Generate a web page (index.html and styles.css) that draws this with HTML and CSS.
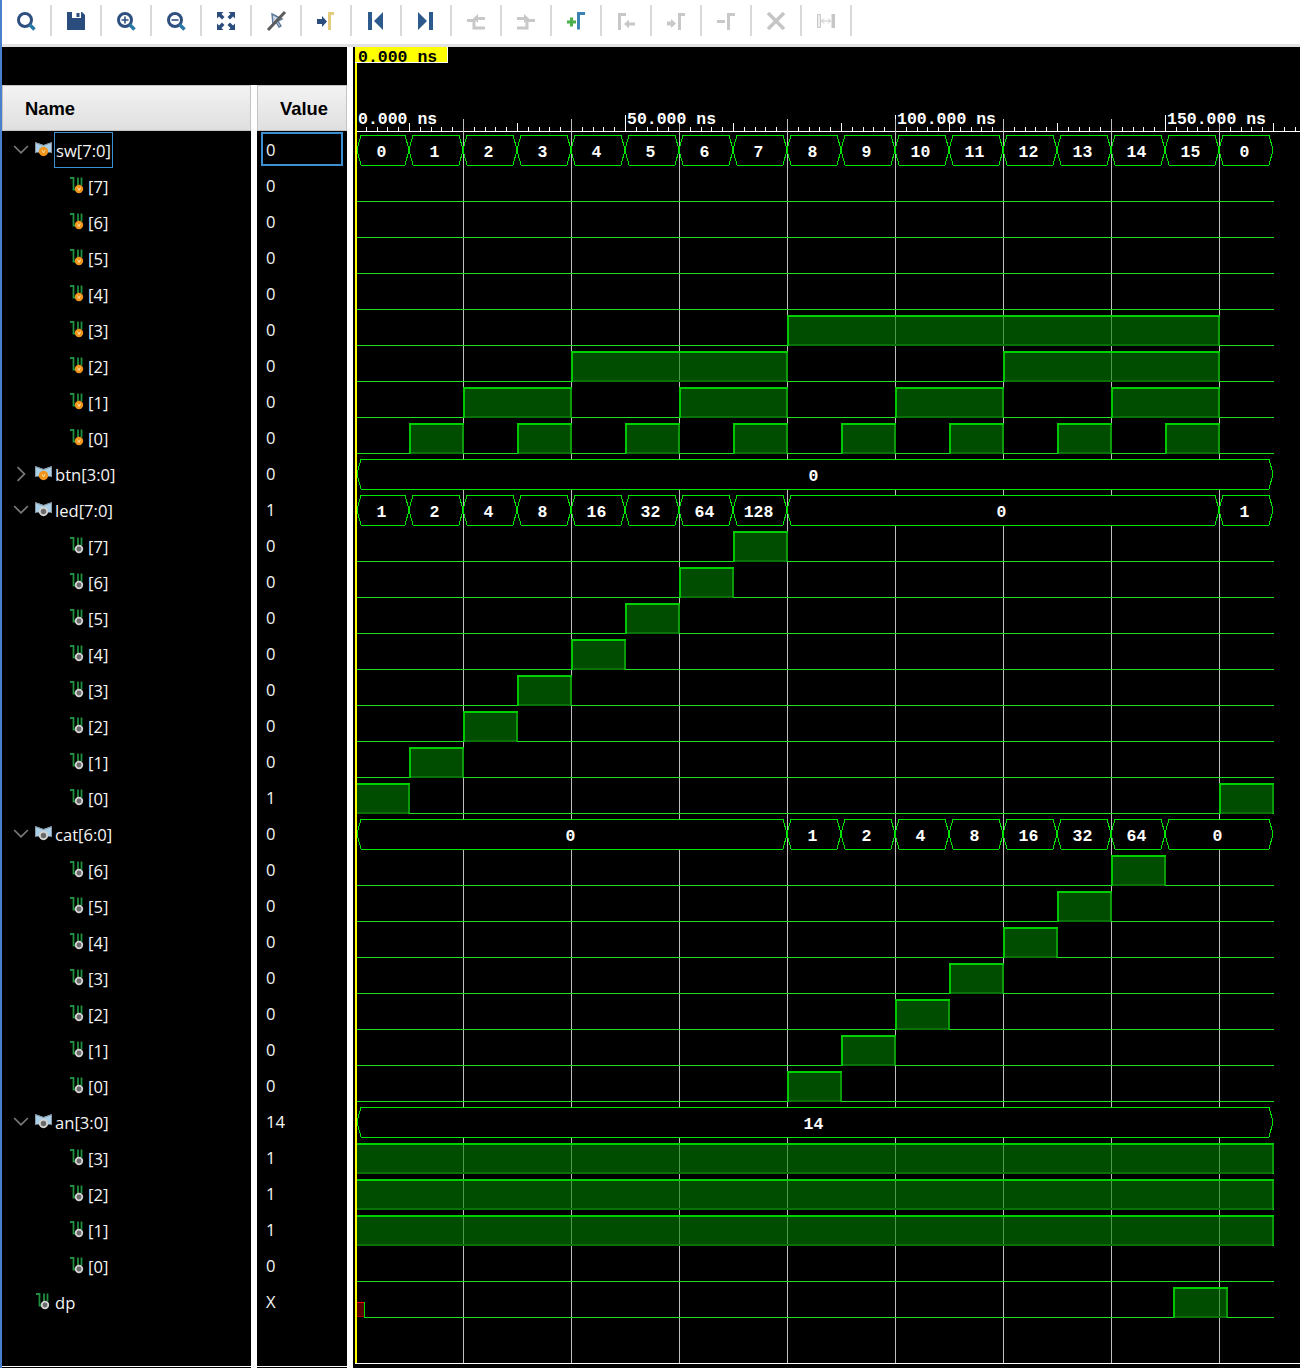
FILE: index.html
```html
<!DOCTYPE html>
<html lang="en">
<head>
    <meta charset="UTF-8">
    <title>Waveform Viewer</title>
    <link rel="stylesheet" href="styles.css">
</head>
<body>
    <svg class="defs">
        <symbol id="wire-in" viewBox="0 0 14 17">
            <path d="M0 1h3.500v11.500h3M8 0.500v8M11.500 0.500v8" fill="none" stroke="#1d8f3e" stroke-width="1.800"/>
            <circle cx="9" cy="12" r="4.200" fill="#f0941c"/>
            <path d="M7.500 10.500l1.500 3 1.500-3" fill="none" stroke="#ffe2a8" stroke-width="0.900"/>
        </symbol>
        <symbol id="wire-out" viewBox="0 0 14 17">
            <path d="M0 1h3.500v11.500h3M8 0.500v8M11.500 0.500v8" fill="none" stroke="#1d8f3e" stroke-width="1.800"/>
            <circle cx="9" cy="12" r="3.300" fill="#6a6a6a" stroke="#d2d2d2" stroke-width="1.800"/>
        </symbol>
        <symbol id="bus-in" viewBox="0 0 17 15">
            <path d="M0 0.500h1.500l7 2.500 7-2.500H17v10H0z" fill="#a9d0e8"/>
            <path d="M0.500 11V0.800l8 2.800 8-2.800V11" fill="none" stroke="#8b97a3"/>
            <circle cx="8.500" cy="9.500" r="4.700" fill="#f0941c"/>
            <path d="M7 8l1.500 3 1.500-3" fill="none" stroke="#ffe2a8" stroke-width="0.900"/>
        </symbol>
        <symbol id="bus-out" viewBox="0 0 17 15">
            <path d="M0 0.500h1.500l7 2.500 7-2.500H17v10H0z" fill="#a9d0e8"/>
            <path d="M0.500 11V0.800l8 2.800 8-2.800V11" fill="none" stroke="#8b97a3"/>
            <circle cx="8.500" cy="9.500" r="3.700" fill="#6a6a6a" stroke="#d2d2d2" stroke-width="2"/>
        </symbol>
        <symbol id="chev-down" viewBox="0 0 14 9">
            <path d="M1 1l6 6 6-6" fill="none" stroke="#7a7a7a" stroke-width="1.500"/>
        </symbol>
        <symbol id="chev-right" viewBox="0 0 14 14">
            <path d="M4 1l6 6-6 6" fill="none" stroke="#7a7a7a" stroke-width="1.500"/>
        </symbol>
    </svg>

    <div class="toolbar">
        <div class="tool"><svg viewBox="0 0 24 24"><circle cx="11" cy="11" r="6.500" class="ring"/><path d="M15.500 15.500l5 5" class="handle"/></svg></div>
        <div class="tool"><svg viewBox="0 0 24 24"><path d="M3 3h15l3 3v15H3z" class="solid"/><path d="M8 3h9v6H8z" fill="#fff"/><path d="M12.500 4h3v4h-3z" class="solid"/></svg></div>
        <div class="tool"><svg viewBox="0 0 24 24"><circle cx="11" cy="11" r="6.500" class="ring"/><path d="M15.500 15.500l5 5" class="handle"/><path d="M7.500 11h7M11 7.500v7" class="thin"/></svg></div>
        <div class="tool"><svg viewBox="0 0 24 24"><circle cx="11" cy="11" r="6.500" class="ring"/><path d="M15.500 15.500l5 5" class="handle"/><path d="M7.500 11h7" class="thin"/></svg></div>
        <div class="tool"><svg viewBox="0 0 24 24"><path class="solid" d="M3 3h6.500L7.500 5l3 3L8 10.500l-3-3L3 9.500zM21 3v6.500l-2-2-3 3L13.500 8l3-3-2-2zM3 21v-6.500l2 2 3-3 2.500 2.500-3 3 2 2zM21 21h-6.500l2-2-3-3 2.500-2.500 3 3 2-2z"/></svg></div>
        <div class="tool"><svg viewBox="0 0 24 24"><path d="M8 5l10 5-4 2 3 5-2 1-3-5-3 3z" fill="#c5d3e2" stroke="#5e7a99" stroke-width="1.400"/><path d="M4 21L21 3" stroke="#5c5c5c" stroke-width="3"/></svg></div>
        <div class="tool"><svg viewBox="0 0 24 24"><path class="solid" d="M3 10h5V7l5 5.500L8 18v-3H3z"/><path d="M15.500 21V4.500H20" class="gold"/></svg></div>
        <div class="tool"><svg viewBox="0 0 24 24"><path class="nav" d="M4 3h4v18H4zM19 3v18L10 12z"/></svg></div>
        <div class="tool"><svg viewBox="0 0 24 24"><path class="nav" d="M4 3v18l9-9zM15 3h4v18h-4z"/></svg></div>
        <div class="tool"><svg viewBox="0 0 24 24"><path class="off" d="M9 9.500l5-4.500v3h7v3h-7v3z"/><path class="off-line" d="M3 11.500h7v7.500h11"/></svg></div>
        <div class="tool"><svg viewBox="0 0 24 24"><path class="off" d="M3 8h7V5l5 4.500-5 4.500v-3H3z"/><path class="off-line" d="M3 19h10v-7.500h8"/></svg></div>
        <div class="tool"><svg viewBox="0 0 24 24"><path d="M3 13h9M7.500 8.500v9" stroke="#4bb04b" stroke-width="3"/><path d="M14.500 20.500V4.500H21" fill="none" stroke="#3c83b5" stroke-width="3"/></svg></div>
        <div class="tool"><svg viewBox="0 0 24 24"><path class="off-line" d="M5.500 21V5.500H12"/><path class="off" d="M10 15l5-4.500v3h6v3h-6v3z"/></svg></div>
        <div class="tool"><svg viewBox="0 0 24 24"><path class="off" d="M3 12.500h4V10l5 4.500L7 19v-2.500H3z"/><path class="off-line" d="M15.500 21V5.500H21"/></svg></div>
        <div class="tool"><svg viewBox="0 0 24 24"><path class="off-line" d="M3 12.500h8M14.500 21V5.500H21"/></svg></div>
        <div class="tool"><svg viewBox="0 0 24 24"><path d="M4 4l16 16M20 4L4 20" stroke="#c6c6c6" stroke-width="3.600"/></svg></div>
        <div class="tool"><svg viewBox="0 0 24 24"><path d="M3.500 5.500h3v13h-3z" fill="#eee" stroke="#c6c6c6"/><path d="M17.500 5H21v14h-3.500z" fill="#c6c6c6"/><path d="M7.500 12h9M10 9.500L7.500 12l2.500 2.500M14 9.500l2.500 2.500-2.500 2.500" fill="none" stroke="#c6c6c6"/></svg></div>
    </div>

    <div class="main">
        <div class="panels">
            <div class="panels-top"></div>
            <div class="cols">
                <div class="col col-name">
                    <div class="col-head">Name</div>
                    <div class="rows" id="nameRows"></div>
                </div>
                <div class="col col-value">
                    <div class="col-head">Value</div>
                    <div class="rows" id="valueRows"></div>
                </div>
            </div>
        </div>
        <svg class="wave" id="wave" viewBox="353 47 947 1321"></svg>
    </div>

    <script src="script.js"></script>
</body>
</html>
```

FILE: styles.css
```css
* {
    box-sizing: border-box;
}

body {
    margin: 0;
    height: 1368px;
    overflow: hidden;
    background-color: #000;
    border-left: 2px solid #4a7fcb;
}

.defs {
    display: none;
}

/* toolbar */
.toolbar {
    display: flex;
    height: 47px;
    padding-top: 5px;
    background-color: #fff;
    border-bottom: 3px solid #e2e2e2;
}

.tool {
    width: 50px;
    height: 31px;
    padding-top: 4px;
    border-right: 2px solid #d9d9d9;
}

.tool svg {
    display: block;
    width: 24px;
    height: 24px;
    margin: 0 auto;
}

.ring {
    fill: none;
    stroke: #2f4f80;
    stroke-width: 3;
}

.handle {
    fill: none;
    stroke: #2a78a5;
    stroke-width: 3.5;
}

.thin {
    fill: none;
    stroke: #2f4f80;
    stroke-width: 1.6;
}

.solid {
    fill: #2b4d7e;
}

.nav {
    fill: #2c5a8c;
}

.gold {
    fill: none;
    stroke: #e3cd7c;
    stroke-width: 3;
}

.off {
    fill: #c8c8c8;
}

.off-line {
    fill: none;
    stroke: #c8c8c8;
    stroke-width: 3;
}

/* panels */
.main {
    display: flex;
    height: 1321px;
}

.panels {
    flex: none;
    width: 351px;
    background-color: #fff;
}

.panels-top {
    width: 345px;
    height: 38px;
    background-color: #000;
}

.cols {
    display: flex;
    gap: 6px;
}

.col {
    height: 1283px;
    background-color: #000;
}

.col-name {
    width: 249px;
}

.col-value {
    width: 90px;
}

.col-head {
    height: 46px;
    padding: 12px 0 0 22px;
    font-family: "Liberation Sans", Arial, sans-serif;
    font-size: 18.4px;
    font-weight: bold;
    color: #000;
    background: linear-gradient(#f3f3f3, #dfdfdf);
    border: 1px solid #c4c4c4;
}

.rows {
    height: 1236px;
    padding-top: 1px;
    border-bottom: 1px solid #fff;
}

.row {
    display: flex;
    align-items: center;
    height: 36px;
    font-family: "Open Sans", sans-serif;
    font-size: 16.6px;
    color: #f5f5f5;
}

.row-top {
    padding-left: 11px;
}

.row-child {
    padding-left: 68px;
}

.row-leaf {
    padding-left: 34px;
}

.chev {
    width: 16px;
    height: 16px;
    margin-right: 6px;
}

.icon {
    display: block;
    flex: none;
}

.icon-bus {
    width: 17px;
    height: 15px;
    margin: -2px 3px 0 0;
}

.icon-wire {
    width: 14px;
    height: 17px;
    margin: -1px 4px 0 0;
}

.row-leaf .icon-wire {
    margin-right: 5px;
}

.sel-name {
    height: 36px;
    margin-left: -1px;
    padding: 1px 1px 0 1px;
    line-height: 34px;
    border: 1px solid #3c8fd0;
}

.row-value {
    padding: 2px 0 0 9px;
}

.row-value.sel-value {
    width: 82px;
    height: 34px;
    margin-left: 4px;
    padding: 0 0 0 3px;
    border: 2px solid #3c8fd0;
}

/* waveform */
.wave {
    display: block;
    flex: none;
    width: 947px;
    height: 1321px;
    background-color: #000;
    shape-rendering: crispEdges;
}

.wave text {
    font-family: "Liberation Mono", monospace;
    font-size: 16.5px;
    font-weight: bold;
    fill: #fff;
}

.wave .marker-text {
    fill: #000;
}

.wave .bus-text {
    text-anchor: middle;
}
```

FILE: script.js
```js
var SW = [0, 1, 2, 3, 4, 5, 6, 7, 8, 9, 10, 11, 12, 13, 14, 15, 0];
var LED = [1, 2, 4, 8, 16, 32, 64, 128, 0, 0, 0, 0, 0, 0, 0, 0, 1];
var CAT = [0, 0, 0, 0, 0, 0, 0, 0, 1, 2, 4, 8, 16, 32, 64, 0, 0];
var fill = function (v) { return SW.map(function () { return v; }); };

var groups = [
    { name: 'sw[7:0]', bits: 8, vals: SW, dir: 'in', open: true },
    { name: 'btn[3:0]', bits: 0, vals: fill(0), dir: 'in', open: false },
    { name: 'led[7:0]', bits: 8, vals: LED, dir: 'out', open: true },
    { name: 'cat[6:0]', bits: 7, vals: CAT, dir: 'out', open: true },
    { name: 'an[3:0]', bits: 4, vals: fill(14), dir: 'out', open: true }
];

var wave = document.getElementById('wave');
var nameRows = document.getElementById('nameRows');
var valueRows = document.getElementById('valueRows');
var NS = 'http://www.w3.org/2000/svg';

function X(t) {
    return Math.floor(355.5 + 5.4 * t);
}

function draw(tag, attrs, text) {
    var el = document.createElementNS(NS, tag);
    for (var k in attrs) el.setAttribute(k, attrs[k]);
    if (text !== undefined) el.textContent = text;
    wave.appendChild(el);
    return el;
}

function box(x, y, w, h, fill, opacity) {
    var a = { x: x, y: y, width: w, height: h, fill: fill };
    if (opacity) a['fill-opacity'] = opacity;
    return draw('rect', a);
}

function icon(type, dir) {
    return '<svg class="icon icon-' + type + '"><use href="#' + type + '-' + dir + '"/></svg>';
}

function addRow(kind, html, value, sel) {
    var n = document.createElement('div');
    n.className = 'row row-' + kind;
    n.innerHTML = html;
    nameRows.appendChild(n);
    var v = document.createElement('div');
    v.className = 'row row-value' + (sel ? ' sel-value' : '');
    v.textContent = value;
    valueRows.appendChild(v);
}

// merge equal neighbours of a list sampled every 10 ns
function runs(vals) {
    var out = [];
    vals.forEach(function (v, i) {
        var last = out[out.length - 1];
        if (last && last.v == v) last.t1 = (i + 1) * 10;
        else out.push({ v: v, t0: i * 10, t1: (i + 1) * 10 });
    });
    return out;
}

function drawBus(y, vals) {
    var top = y - 15, bot = y + 15;
    runs(vals).forEach(function (s) {
        var a = s.t0 == 0 ? 357 : X(s.t0), b = X(s.t1);
        var pts = [a + 4, top, b - 4, top, b, y, b - 4, bot, a + 4, bot, a, y].join(' ');
        draw('polygon', { points: pts, fill: '#000', stroke: '#00e600', 'stroke-width': 1 });
        draw('text', { x: (a + b) / 2 - 1.5, y: y + 7, 'class': 'bus-text' }, s.v);
    });
}

// x positions are pixels here, so dp can use its own offsets
function drawBit(y, highs, start) {
    var top = y - 15, low = y + 15, cur = start || 357;
    highs.forEach(function (h) {
        if (h[0] > cur) box(cur, low, h[0] - cur, 1, '#1fe01f');
        var w = h[1] - h[0];
        box(h[0], top, w, 30, '#008000', 0.6);
        box(h[0], low - 1, w, 2, '#0a700a');
        box(h[1] - 1, top, 2, 31, '#0a9a0a');
        if (h[0] > 357) box(h[0], top, 2, 31, '#00c800');
        box(h[0], top, w + 1, 2, '#00d000');
        cur = h[1];
    });
    if (cur < 1274) box(cur, low, 1274 - cur, 1, '#1fe01f');
}

function bitHighs(vals, bit) {
    var highs = [];
    runs(vals.map(function (v) { return (v >> bit) & 1; })).forEach(function (r) {
        if (r.v) highs.push([r.t0 == 0 ? 357 : X(r.t0), r.t1 == 170 ? 1273 : X(r.t1)]);
    });
    return highs;
}

// ruler and grid go under the signals
box(357, 131, 943, 1, '#fff');
for (var t = 2; t <= 174; t += 2) {
    var h = t % 50 == 0 ? 16 : t % 20 == 0 ? 12 : t % 10 == 0 ? 8 : 4;
    box(X(t), 131 - h, 1, h, '#fff');
}
for (var g = 20; g <= 160; g += 20) box(X(g), 119, 1, 1244, '#c0c0c0');
[[0, 358], [50, 627], [100, 897], [150, 1167]].forEach(function (m) {
    draw('text', { x: m[1], y: 124 }, m[0].toFixed(3) + ' ns');
});

var row = 0;
function rowY() {
    return 150 + 36 * row;
}

groups.forEach(function (g, gi) {
    var chev = g.open ? 'chev-down' : 'chev-right';
    var label = gi == 0 ? '<span class="sel-name">' + g.name + '</span>' : '<span>' + g.name + '</span>';
    addRow('top', '<svg class="chev"><use href="#' + chev + '"/></svg>' + icon('bus', g.dir) + label, g.vals[0], gi == 0);
    drawBus(rowY(), g.vals);
    row++;

    for (var b = g.bits - 1; b >= 0; b--) {
        addRow('child', icon('wire', g.dir) + '<span>[' + b + ']</span>', (g.vals[0] >> b) & 1);
        drawBit(rowY(), bitHighs(g.vals, b));
        row++;
    }
});

// dp starts undefined, then pulses once near the end
addRow('leaf', icon('wire', 'out') + '<span>dp</span>', 'X');
box(357, 1302, 7, 15, '#5a0000');
box(357, 1302, 7, 1, '#ff0000');
box(357, 1316, 7, 1, '#a00000');
box(364, 1302, 1, 16, '#00e000');
drawBit(rowY(), [[1173, 1227]], 365);

// cursor and its time marker sit on top
box(355, 47, 2, 1316, '#ffff00');
box(355, 47, 92, 15, '#ffff00');
box(447, 47, 1, 16, '#fff');
box(355, 62, 93, 1, '#fff');
draw('text', { x: 358, y: 62, 'class': 'marker-text' }, '0.000 ns');
box(355, 1363, 945, 1, '#fff');
```
